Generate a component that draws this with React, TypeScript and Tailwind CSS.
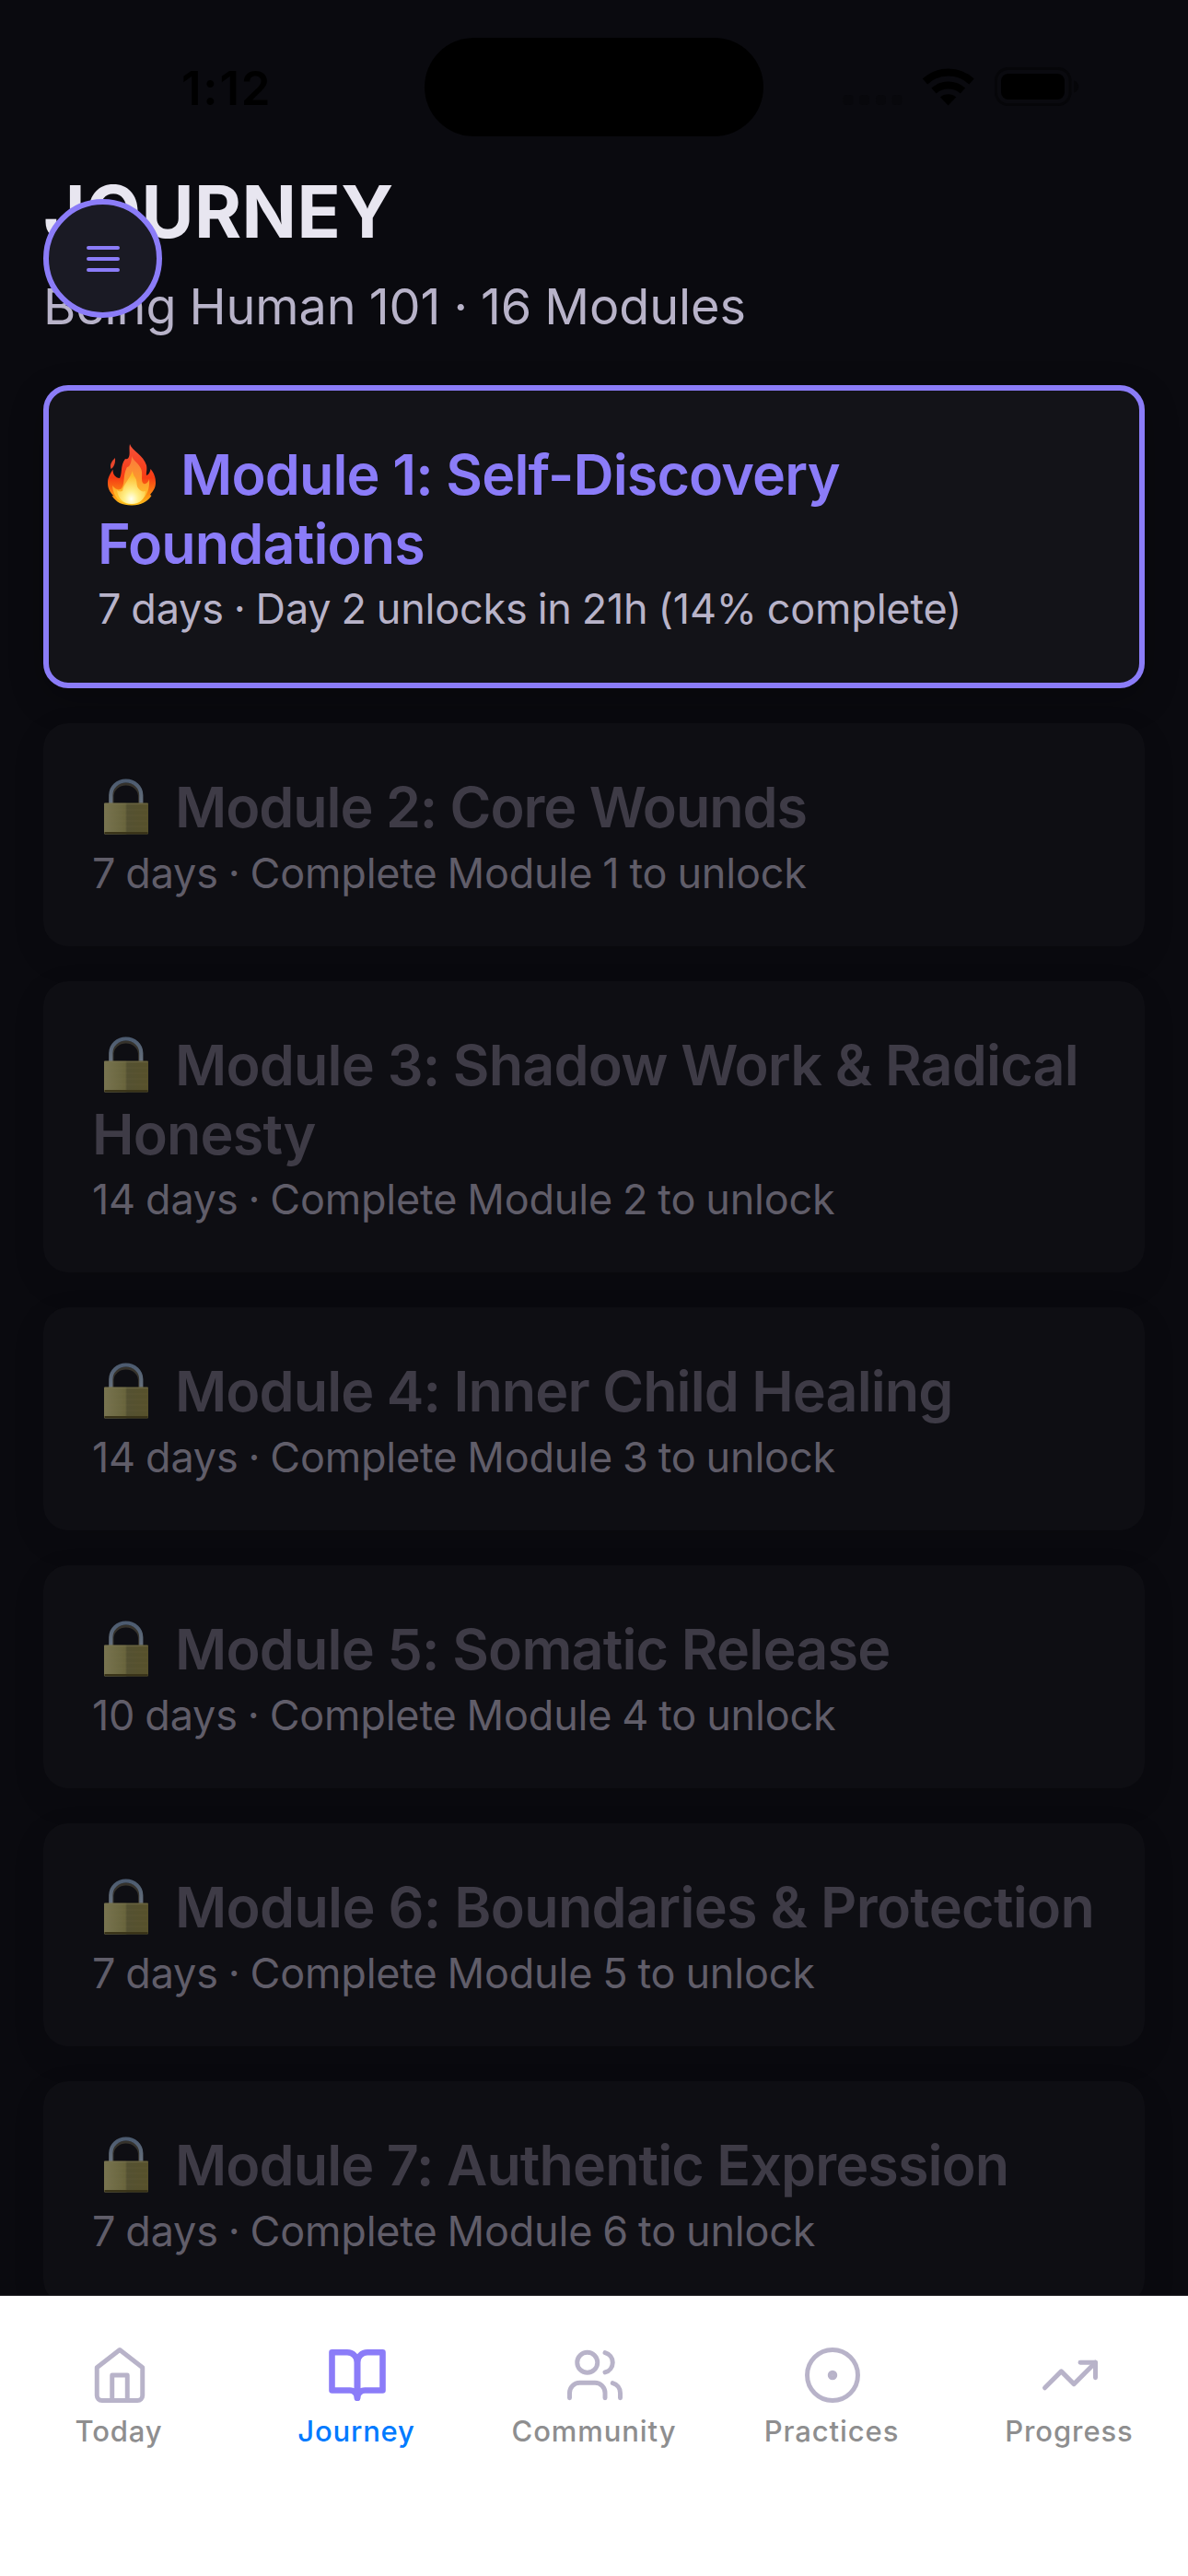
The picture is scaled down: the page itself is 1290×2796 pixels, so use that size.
import type { ReactNode } from 'react';

type Module = { lines: string[]; meta: string; tracking: string };

const lockedModules: Module[] = [
  { lines: ['Module 2: Core Wounds'], meta: '7 days · Complete Module 1 to unlock', tracking: 'tracking-[-1.05px]' },
  { lines: ['Module 3: Shadow Work & Radical', 'Honesty'], meta: '14 days · Complete Module 2 to unlock', tracking: 'tracking-[-0.8px]' },
  { lines: ['Module 4: Inner Child Healing'], meta: '14 days · Complete Module 3 to unlock', tracking: 'tracking-[-0.92px]' },
  { lines: ['Module 5: Somatic Release'], meta: '10 days · Complete Module 4 to unlock', tracking: 'tracking-[-0.82px]' },
  { lines: ['Module 6: Boundaries & Protection'], meta: '7 days · Complete Module 5 to unlock', tracking: 'tracking-[-0.68px]' },
  { lines: ['Module 7: Authentic Expression'], meta: '7 days · Complete Module 6 to unlock', tracking: 'tracking-[-0.92px]' },
];

function Fire() {
  return (
    <svg className="h-[76px] w-[90px] shrink-0" viewBox="0 0 90 76" aria-hidden="true">
      <defs>
        <linearGradient id="flameOuter" x1="0" y1="0" x2="0" y2="1">
          <stop offset="0" stopColor="#f4513a" />
          <stop offset="0.55" stopColor="#f63c14" />
          <stop offset="0.82" stopColor="#fb8a12" />
          <stop offset="1" stopColor="#fdc21c" />
        </linearGradient>
        <linearGradient id="flameMid" x1="0" y1="0" x2="0" y2="1">
          <stop offset="0" stopColor="#fb7a3c" />
          <stop offset="0.5" stopColor="#fd9a2c" />
          <stop offset="1" stopColor="#ffd42a" />
        </linearGradient>
        <radialGradient id="flameCore" cx="0.5" cy="0.85" r="0.7">
          <stop offset="0" stopColor="#fffff0" />
          <stop offset="0.35" stopColor="#fff08a" />
          <stop offset="1" stopColor="#fdbb2a" />
        </radialGradient>
      </defs>
      <path d="M19 20c-4 4-6 7-4.500 12c3-2 5-6 4.500-12z" fill="#e8462c" />
      <path
        fill="url(#flameOuter)"
        d="M35 5c2 7 15 12 18 23c1 5-.5 8 0 11c3-1 4-4 4.500-7c4 5 5.500 9 5.500 15c0 6-3 9-6 13l1.500 1c-4 6-11 10.500-21.500 10.500S20 68 15.500 61l2 .3C13 57 11 53 11 47c0-6 3-10 5.500-14.500c0 6 3 9 7.500 9.500c3-6 .5-14 6-21c2 1 4-.5 4.500-4c.5-4-.5-8 .5-12z"
      />
      <path
        fill="url(#flameMid)"
        d="M37 18c2 6 10 9 11 17c.5 6-1 11 2 13c3 1 5-2 6-5c1 12-4 25-19 27C23 70 17 62 16 50c3 4 7 6 10 3c4-5 1-14 6-23c3 0 5-6 5-12z"
      />
      <path
        fill="url(#flameCore)"
        d="M38 34c-3 9-10 14-11 22c-3 1-5 0-6-1c1 9 7 15 16 15s15-6 15-14c-3 1-5 0-7-2c-3-3-2-6-3-10c-1-4-4-5-4-10z"
      />
    </svg>
  );
}

function Lock() {
  return (
    <svg className="h-[76px] w-[90px] shrink-0" viewBox="0 0 90 76" aria-hidden="true">
      <defs>
        <linearGradient id="lockBody" x1="0" y1="0" x2="1" y2="0">
          <stop offset="0" stopColor="#787450" />
          <stop offset="0.48" stopColor="#68643c" />
          <stop offset="0.52" stopColor="#545132" />
          <stop offset="1" stopColor="#57512b" />
        </linearGradient>
        <linearGradient id="lockShackle" x1="0" y1="0" x2="0" y2="1">
          <stop offset="0" stopColor="#4c5b70" />
          <stop offset="1" stopColor="#69727d" />
        </linearGradient>
      </defs>
      <path d="M22 36V25.500a14.800 13.500 0 0 1 29.500 0V36" fill="none" stroke="#35322c" strokeWidth="3" />
      <path d="M20.300 36V25a16.500 15.500 0 0 1 33 0V36" fill="none" stroke="url(#lockShackle)" strokeWidth="4.200" />
      <rect x="13" y="33.500" width="48" height="34" rx="1" fill="url(#lockBody)" />
      <path d="M13.500 66h47" stroke="#3a3419" strokeWidth="2" />
      <path d="M13.500 34.500h47" stroke="#7b7652" strokeOpacity="0.500" strokeWidth="1.500" />
      <path d="M14 41h46M14 47h46M14 53h46M14 59h46" stroke="#8a8455" strokeOpacity="0.100" strokeWidth="1.500" />
    </svg>
  );
}

function ModuleTitle({ icon, lines, tracking }: { icon: ReactNode; lines: string[]; tracking: string }) {
  return (
    <h2 className={`text-[61px] font-semibold whitespace-nowrap ${tracking}`}>
      <span className="flex h-[76px] leading-[76px]">
        {icon}
        {lines[0]}
      </span>
      {lines[1] && <span className="block h-[74px] leading-[75px]">{lines[1]}</span>}
    </h2>
  );
}

function ModuleMeta({ children, color }: { children: ReactNode; color: string }) {
  return (
    <p className={`mt-[7px] text-[45px] leading-[54px] tracking-[-0.2px] whitespace-nowrap [word-spacing:-1.4px] ${color}`}>
      {children}
    </p>
  );
}

function LockedCard({ lines, meta, tracking }: Module) {
  return (
    <article className="shrink-0 rounded-[27px] bg-[#0e0e13] px-[53px] pt-[53px] pb-[52px] text-[#3e3b46] shadow-[0_12px_36px_rgba(0,0,0,0.1)]">
      <ModuleTitle icon={<Lock />} lines={lines} tracking={tracking} />
      <ModuleMeta color="text-[#605d69]">{meta}</ModuleMeta>
    </article>
  );
}

function StatusBar() {
  return (
    <div className="flex h-[188px] shrink-0 items-start">
      <div className="w-[461px] pt-[65px] pl-[197px] text-[51px] leading-[62px] font-semibold tracking-[1.8px] text-black">1:12</div>
      <div className="mt-[41px] h-[107px] w-[368px] rounded-full bg-black" />
      <svg className="mt-[60px] ml-[77px] h-[70px] w-[280px]" viewBox="906 60 280 70" aria-hidden="true">
        <g fill="#08080c">
          <rect x="915.500" y="103" width="11" height="11" rx="4" />
          <rect x="933" y="103" width="11" height="11" rx="4" />
          <rect x="951" y="103" width="11" height="11" rx="4" />
          <rect x="968.500" y="103" width="11" height="11" rx="4" />
        </g>
        <g fill="none" stroke="#000" strokeWidth="8">
          <path d="M1004.500 88.500a37 37 0 0 1 50.500 0" />
          <path d="M1014 98.500a24 24 0 0 1 31.500 0" />
        </g>
        <path d="M1029.600 114.500l-8.600-9a13 13 0 0 1 17.200 0z" fill="#000" />
        <rect x="1081.500" y="74.500" width="80.500" height="39" rx="13" fill="none" stroke="#060609" strokeWidth="3" />
        <rect x="1087" y="80" width="69" height="28" rx="8" fill="#000" />
        <path d="M1166 87.500c7 2 7 11 0 13z" fill="#060609" />
      </svg>
    </div>
  );
}

type Tab = { label: string; icon: ReactNode; active?: boolean };

const tabs: Tab[] = [
  {
    label: 'Today',
    icon: (
      <>
        <path d="M3 9l9-7 9 7v11a2 2 0 0 1-2 2H5a2 2 0 0 1-2-2z" />
        <path d="M9 22V12h6v10" />
      </>
    ),
  },
  {
    label: 'Journey',
    active: true,
    icon: (
      <>
        <path d="M2 3h6a4 4 0 0 1 4 4v14a3 3 0 0 0-3-3H2z" />
        <path d="M22 3h-6a4 4 0 0 0-4 4v14a3 3 0 0 1 3-3h7z" />
      </>
    ),
  },
  {
    label: 'Community',
    icon: (
      <>
        <path d="M16 21v-2a4 4 0 0 0-4-4H6a4 4 0 0 0-4 4v2" />
        <circle cx="9" cy="7" r="4" />
        <path d="M22 21v-2a4 4 0 0 0-3-3.870" />
        <path d="M16 3.130a4 4 0 0 1 0 7.750" />
      </>
    ),
  },
  {
    label: 'Practices',
    icon: (
      <>
        <circle cx="12" cy="12" r="10" />
        <circle cx="12" cy="12" r="1" />
      </>
    ),
  },
  {
    label: 'Progress',
    icon: (
      <>
        <path d="M22 7l-8.500 8.500-5-5L2 17" />
        <path d="M16 7h6v6" />
      </>
    ),
  },
];

function TabBar() {
  return (
    <nav className="grid h-[305px] shrink-0 grid-cols-5 border-t border-[#26262b] bg-white pt-[53px]">
      {tabs.map(({ label, icon, active }) => (
        <div key={label} className="flex flex-col items-center">
          <svg
            className={active ? 'ml-[2px] size-[66px] text-[#8b7cf8]' : 'ml-[2px] size-[66px] text-[#b8b3c9]'}
            viewBox="0 0 24 24"
            fill="none"
            stroke="currentColor"
            strokeWidth={active ? 2.4 : 1.8}
            strokeLinecap="round"
            strokeLinejoin="round"
            aria-hidden="true"
          >
            {icon}
          </svg>
          <span
            className={
              active
                ? 'mt-[9px] text-[31px] leading-[38px] font-medium tracking-[0.8px] text-[#007aff]'
                : 'mt-[9px] text-[31px] leading-[38px] font-medium tracking-[0.9px] text-[#8e8e8f]'
            }
          >
            {label}
          </span>
        </div>
      ))}
    </nav>
  );
}

export default function App() {
  return (
    <div className="relative flex h-[2796px] w-[1290px] flex-col overflow-hidden bg-[#0a0a0f] font-['Inter',sans-serif]">
      <StatusBar />
      <main className="flex min-h-0 flex-1 flex-col overflow-hidden px-[47px]">
        <h1 className="shrink-0 text-[78px] leading-[84px] font-bold tracking-[0.4px] text-[#e8e6f0]">JOURNEY</h1>
        <p className="mt-[28px] shrink-0 text-[54px] leading-[66px] tracking-[-0.1px] text-[#b8b3c9] [word-spacing:-1px]">
          Being Human 101 · 16 Modules
        </p>
        <article className="mt-[52px] shrink-0 rounded-[27px] border-[6px] border-[#8b7cf8] bg-[#131318] p-[53px] text-[#8b7cf8] shadow-[0_12px_36px_rgba(0,0,0,0.25)]">
          <ModuleTitle icon={<Fire />} lines={['Module 1: Self-Discovery', 'Foundations']} tracking="tracking-[-0.85px]" />
          <ModuleMeta color="text-[#b8b3c9]">7 days · Day 2 unlocks in 21h (14% complete)</ModuleMeta>
        </article>
        <section className="mt-[38px] flex flex-col gap-[38px]">
          {lockedModules.map((m) => (
            <LockedCard key={m.lines[0]} {...m} />
          ))}
        </section>
      </main>
      <TabBar />
      <button
        aria-label="Menu"
        className="absolute top-[216px] left-[47px] flex size-[129px] items-center justify-center rounded-full border-[6px] border-[#8b7cf8] bg-[#1a1a24]"
      >
        <svg className="size-[48px]" viewBox="0 0 24 24" fill="none" stroke="#8b7cf8" strokeWidth="2" strokeLinecap="round" aria-hidden="true">
          <path d="M4 6h16M4 12h16M4 18h16" />
        </svg>
      </button>
    </div>
  );
}
